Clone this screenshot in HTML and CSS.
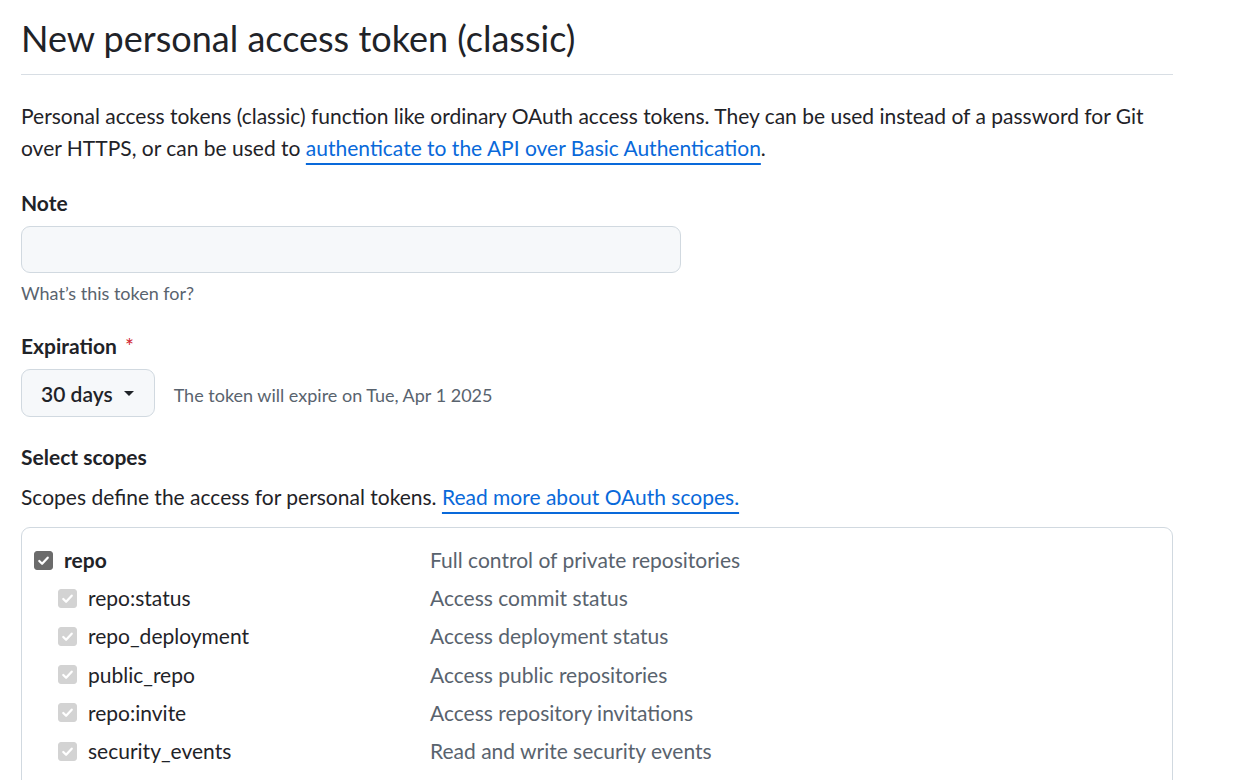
FILE: index.html
```html
<!DOCTYPE html>
<html lang="en">
<head>
<meta charset="utf-8">
<title>New personal access token (classic)</title>
<link rel="stylesheet" href="styles.css">
</head>
<body>
<main class="page">
  <div class="subhead">
    <h1 class="subhead-title">New personal access token (classic)</h1>
  </div>
  <p class="intro">Personal access tokens (classic) function like ordinary OAuth access tokens. They can be used instead of a password for Git over HTTPS, or can be used to <a href="#" class="link">authenticate to the API over Basic Authentication</a>.</p>

  <div class="field">
    <label class="field-label" for="note">Note</label>
    <input id="note" class="text-input" type="text">
    <p class="field-note">What’s this token for?</p>
  </div>

  <div class="field">
    <div class="field-label">Expiration <span class="required">*</span></div>
    <div class="expire-row">
      <button class="select-btn" type="button">30 days <span class="caret"></span></button>
      <span class="expire-note">The token will expire on Tue, Apr 1 2025</span>
    </div>
  </div>

  <div class="field scopes">
    <div class="field-label">Select scopes</div>
    <p class="scopes-desc">Scopes define the access for personal tokens. <a href="#" class="link">Read more about OAuth scopes.</a></p>
    <div class="scope-box">
      <div class="scope-row parent">
        <label class="scope-name"><span class="cb cb-on"><svg viewBox="0 0 16 16"><path d="M3.5 8.5l3 3 6-6.5" /></svg></span>repo</label>
        <span class="scope-desc">Full control of private repositories</span>
      </div>
      <div class="scope-row child">
        <label class="scope-name"><span class="cb cb-dis"><svg viewBox="0 0 16 16"><path d="M3.5 8.5l3 3 6-6.5" /></svg></span>repo:status</label>
        <span class="scope-desc">Access commit status</span>
      </div>
      <div class="scope-row child">
        <label class="scope-name"><span class="cb cb-dis"><svg viewBox="0 0 16 16"><path d="M3.5 8.5l3 3 6-6.5" /></svg></span>repo_deployment</label>
        <span class="scope-desc">Access deployment status</span>
      </div>
      <div class="scope-row child">
        <label class="scope-name"><span class="cb cb-dis"><svg viewBox="0 0 16 16"><path d="M3.5 8.5l3 3 6-6.5" /></svg></span>public_repo</label>
        <span class="scope-desc">Access public repositories</span>
      </div>
      <div class="scope-row child">
        <label class="scope-name"><span class="cb cb-dis"><svg viewBox="0 0 16 16"><path d="M3.5 8.5l3 3 6-6.5" /></svg></span>repo:invite</label>
        <span class="scope-desc">Access repository invitations</span>
      </div>
      <div class="scope-row child">
        <label class="scope-name"><span class="cb cb-dis"><svg viewBox="0 0 16 16"><path d="M3.5 8.5l3 3 6-6.5" /></svg></span>security_events</label>
        <span class="scope-desc">Read and write security events</span>
      </div>
    </div>
  </div>
</main>
</body>
</html>
```

FILE: styles.css
```css
* { box-sizing: border-box; }

html, body {
  margin: 0;
  padding: 0;
  background: #ffffff;
}

body {
  font-family: Lato, "Noto Sans", "Liberation Sans", sans-serif;
  font-size: 21px;
  line-height: 32px;
  color: #1f2328;
  overflow: hidden;
}

.page {
  width: 1152px;
  margin-left: 21px;
}

.subhead {
  padding-top: 11px;
  padding-bottom: 9px;
  border-bottom: 1px solid #d8dee4;
}

.subhead-title {
  margin: 0;
  font-size: 36px;
  line-height: 54px;
  font-weight: 400;
}

.intro {
  margin: 25px 0 0;
}

.link {
  color: #0969da;
  text-decoration: underline;
  text-decoration-thickness: 2px;
  text-underline-offset: 7px;
}

.field {
  margin-top: 23px;
}

.field-label {
  display: block;
  font-weight: 700;
  line-height: 32px;
}

.required {
  color: #d1242f;
  font-weight: 400;
  margin-left: 3px;
}

.text-input {
  display: block;
  width: 660px;
  height: 47px;
  margin-top: 7px;
  background: #f6f8fa;
  border: 1px solid #d1d9e0;
  border-radius: 9px;
  font: inherit;
  outline: none;
}

.field-note {
  margin: 7px 0 0;
  font-size: 18px;
  line-height: 27px;
  color: #59636e;
}

.expire-row {
  display: flex;
  align-items: center;
  gap: 19px;
  margin-top: 7px;
}

.select-btn {
  display: flex;
  align-items: center;
  gap: 11px;
  height: 48px;
  padding: 0 20px 0 19px;
  background: #f6f8fa;
  border: 1px solid #d1d9e0;
  border-radius: 9px;
  font-family: inherit;
  font-size: 21px;
  font-weight: 600;
  color: #1f2328;
}

.caret {
  width: 0;
  height: 0;
  border-left: 5px solid transparent;
  border-right: 5px solid transparent;
  border-top: 5px solid #1f2328;
}

.expire-note {
  font-size: 18px;
  color: #59636e;
  padding-top: 3px;
}

.scopes {
  margin-top: 24px;
}

.scopes-desc {
  margin: 8px 0 0;
}

.scope-box {
  margin-top: 14px;
  border: 1px solid #d1d9e0;
  border-radius: 9px;
  padding: 13px 12px 24px;
}

.scope-row {
  display: grid;
  grid-template-columns: 396px 1fr;
  align-items: center;
  height: 38.2px;
}

.scope-row.child {
  grid-template-columns: 372px 1fr;
  padding-left: 24px;
}

.scope-name {
  display: flex;
  align-items: center;
  gap: 11px;
}

.parent .scope-name {
  font-weight: 700;
}

.scope-desc {
  color: #59636e;
}

.cb {
  display: inline-flex;
  align-items: center;
  justify-content: center;
  width: 19px;
  height: 19px;
  border-radius: 3px;
  border: 1px solid #767676;
  background: #fff;
}

.cb svg {
  width: 15px;
  height: 15px;
  fill: none;
  stroke: #fff;
  stroke-width: 2.4;
  stroke-linecap: round;
  stroke-linejoin: round;
}

.cb-on {
  background: #6b6b6b;
  border-color: #6b6b6b;
}

.cb-dis {
  background: #d3d3d3;
  border-color: #d3d3d3;
}
```
